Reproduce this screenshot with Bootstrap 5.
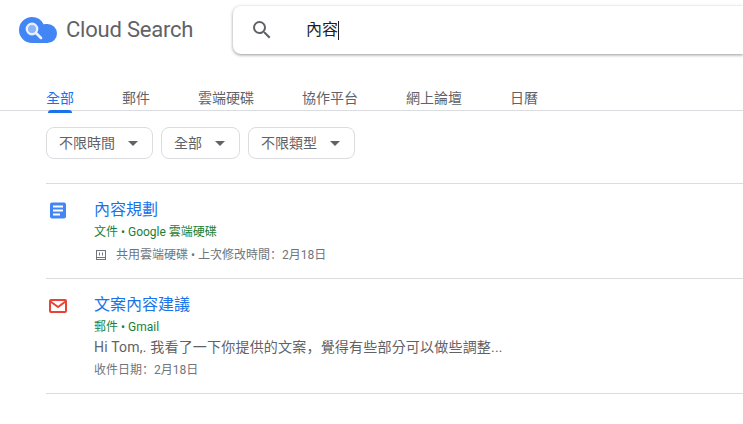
<!DOCTYPE html>
<html lang="zh-Hant">
  <head>
    <meta charset="UTF-8" />
    <title>Cloud Search</title>
    <link href="https://cdn.jsdelivr.net/npm/bootstrap@5.3.0/dist/css/bootstrap.min.css" rel="stylesheet" />
    <style>
      body {
        font-family: Roboto, "Noto Sans CJK TC", sans-serif;
        color: #5f6368;
        background: #fff;
        overflow: hidden;
      }
      .top-bar {
        height: 60px;
        padding: 6px 0 0 19px;
      }
      .brand-name {
        font-size: 22px;
        line-height: 28px;
        margin-left: 9px;
        width: 127px;
        white-space: nowrap;
        letter-spacing: -0.22px;
        color: #5f6368;
      }
      .search-box {
        height: 48px;
        margin-left: 40px;
        padding-left: 17px;
        border-radius: 8px 0 0 8px;
        box-shadow: 0 1px 3px rgba(60, 64, 67, 0.45), 0 1px 4px rgba(60, 64, 67, 0.12);
      }
      .search-text {
        margin-left: 32px;
        font-size: 16px;
        color: #202124;
      }
      .search-caret {
        width: 1px;
        height: 19px;
        background: #202124;
      }
      .tab-bar {
        margin-top: 28px;
        height: 23px;
        padding-left: 46px;
        gap: 48px;
        border-bottom: 1px solid #dadce0;
      }
      .tab-item {
        position: relative;
        font-size: 14px;
        line-height: 20px;
        color: #5f6368;
        text-decoration: none;
      }
      .tab-item.is-on {
        color: #1a73e8;
      }
      .tab-item.is-on::after {
        content: "";
        position: absolute;
        left: 2px;
        right: 2px;
        bottom: -3px;
        height: 3px;
        background: #1a73e8;
        border-radius: 3px 3px 0 0;
      }
      .filter-row {
        margin-top: 16px;
        padding-left: 46px;
      }
      .filter-btn {
        height: 32px;
        padding: 0 14px 0 12px;
        font-size: 14px;
        color: #5f6368;
        background: #fff;
        border: 1px solid #dadce0;
        border-radius: 8px;
      }
      .filter-arrow {
        width: 0;
        height: 0;
        margin-left: 13px;
        border-left: 5px solid transparent;
        border-right: 5px solid transparent;
        border-top: 5px solid #5f6368;
      }
      .result-list {
        margin: 24px 0 0 46px;
        border-top: 1px solid #dadce0;
      }
      .result-row {
        padding-top: 14px;
        border-bottom: 1px solid #dadce0;
      }
      .result-row.first-row {
        height: 95px;
      }
      .result-row.second-row {
        height: 115px;
      }
      .result-icon {
        width: 48px;
        flex: none;
      }
      .result-title {
        font-size: 16px;
        line-height: 20px;
        color: #1a73e8;
        text-decoration: none;
      }
      .result-source {
        margin-top: 2px;
        font-size: 12px;
        line-height: 16px;
        color: #188038;
      }
      .result-meta {
        font-size: 12px;
        line-height: 16px;
        color: #70757a;
      }
      .first-row .result-meta {
        margin-top: 6px;
      }
      .second-row .result-meta {
        margin-top: 4px;
      }
      .result-snippet {
        margin-top: 1px;
        font-size: 14px;
        line-height: 20px;
        letter-spacing: 0.2px;
        color: #5f6368;
      }
      .meta-icon {
        margin-right: 10px;
      }
      .low-punct {
        font-family: "Noto Sans CJK SC", sans-serif;
      }
    </style>
  </head>
  <body>
    <header class="top-bar d-flex align-items-start">
      <div class="d-flex align-items-center flex-none" style="height: 48px">
        <svg width="38" height="26" viewBox="0 0 38 26">
          <path fill="#4285f4" d="M13 0a13 13 0 0 1 11.600 7.200A9.500 9.500 0 0 1 28.500 7 9.500 9.500 0 0 1 38 16.500 9.500 9.500 0 0 1 28.500 26H13A13 13 0 0 1 13 0z" />
          <circle cx="13" cy="12" r="5.200" fill="#8ab4f8" stroke="#e8f0fe" stroke-width="2.400" />
          <path stroke="#e8f0fe" stroke-width="2.600" stroke-linecap="round" d="M17 16l5 5" />
        </svg>
        <span class="brand-name">Cloud Search</span>
      </div>
      <div class="search-box flex-grow-1 d-flex align-items-center">
        <svg width="24" height="24" viewBox="0 0 24 24" fill="#5f6368">
          <path d="M15.500 14h-.79l-.28-.27A6.470 6.470 0 0 0 16 9.500 6.500 6.500 0 1 0 9.500 16c1.610 0 3.090-.59 4.230-1.570l.27.28v.79l5 4.990L20.490 19l-4.990-5zm-6 0C7.010 14 5 11.990 5 9.500S7.010 5 9.500 5 14 7.010 14 9.500 11.990 14 9.500 14z" />
        </svg>
        <span class="search-text">內容</span>
        <span class="search-caret"></span>
      </div>
    </header>

    <nav class="tab-bar d-flex">
      <a class="tab-item is-on" href="#">全部</a>
      <a class="tab-item" href="#">郵件</a>
      <a class="tab-item" href="#">雲端硬碟</a>
      <a class="tab-item" href="#">協作平台</a>
      <a class="tab-item" href="#">網上論壇</a>
      <a class="tab-item" href="#">日曆</a>
    </nav>

    <div class="filter-row d-flex gap-2">
      <button class="filter-btn d-flex align-items-center" type="button">不限時間<span class="filter-arrow"></span></button>
      <button class="filter-btn d-flex align-items-center" type="button">全部<span class="filter-arrow"></span></button>
      <button class="filter-btn d-flex align-items-center" type="button">不限類型<span class="filter-arrow"></span></button>
    </div>

    <main class="result-list">
      <div class="result-row first-row d-flex">
        <div class="result-icon">
          <svg width="24" height="24" viewBox="0 0 24 24">
            <rect x="4" y="3.500" width="16" height="16" rx="2" fill="#4285f4" />
            <path fill="#fff" d="M7 6.500h10v2H7zM7 10.500h10v2H7zM7 14.500h7v2H7z" />
          </svg>
        </div>
        <div>
          <a class="result-title" href="#">內容規劃</a>
          <div class="result-source">文件 • Google 雲端硬碟</div>
          <div class="result-meta d-flex align-items-center">
            <svg class="meta-icon" width="12" height="12" viewBox="0 0 12 12" fill="none" stroke="#70757a">
              <rect x="2.500" y="1.500" width="9" height="9" />
              <path d="M2.500 8.500h9M5.500 3.500v3M8.500 3.500v3" />
            </svg>
            <span>共用雲端硬碟 • 上次修改時間<span class="low-punct" lang="zh-Hans">：</span>2月18日</span>
          </div>
        </div>
      </div>
      <div class="result-row second-row d-flex">
        <div class="result-icon">
          <svg width="24" height="24" viewBox="0 0 24 24">
            <rect x="4" y="6" width="16" height="12" rx="1" fill="none" stroke="#ea4335" stroke-width="2" />
            <path fill="none" stroke="#ea4335" stroke-width="2" d="M4.500 7.500L12 13l7.500-5.500" />
          </svg>
        </div>
        <div>
          <a class="result-title" href="#">文案內容建議</a>
          <div class="result-source">郵件 • Gmail</div>
          <div class="result-snippet">Hi Tom,. 我看了一下你提供的文案<span class="low-punct" lang="zh-Hans">，</span>覺得有些部分可以做些調整...</div>
          <div class="result-meta">收件日期<span class="low-punct" lang="zh-Hans">：</span>2月18日</div>
        </div>
      </div>
    </main>
    <script src="https://cdn.jsdelivr.net/npm/bootstrap@5.3.0/dist/js/bootstrap.bundle.min.js"></script>
  </body>
</html>
